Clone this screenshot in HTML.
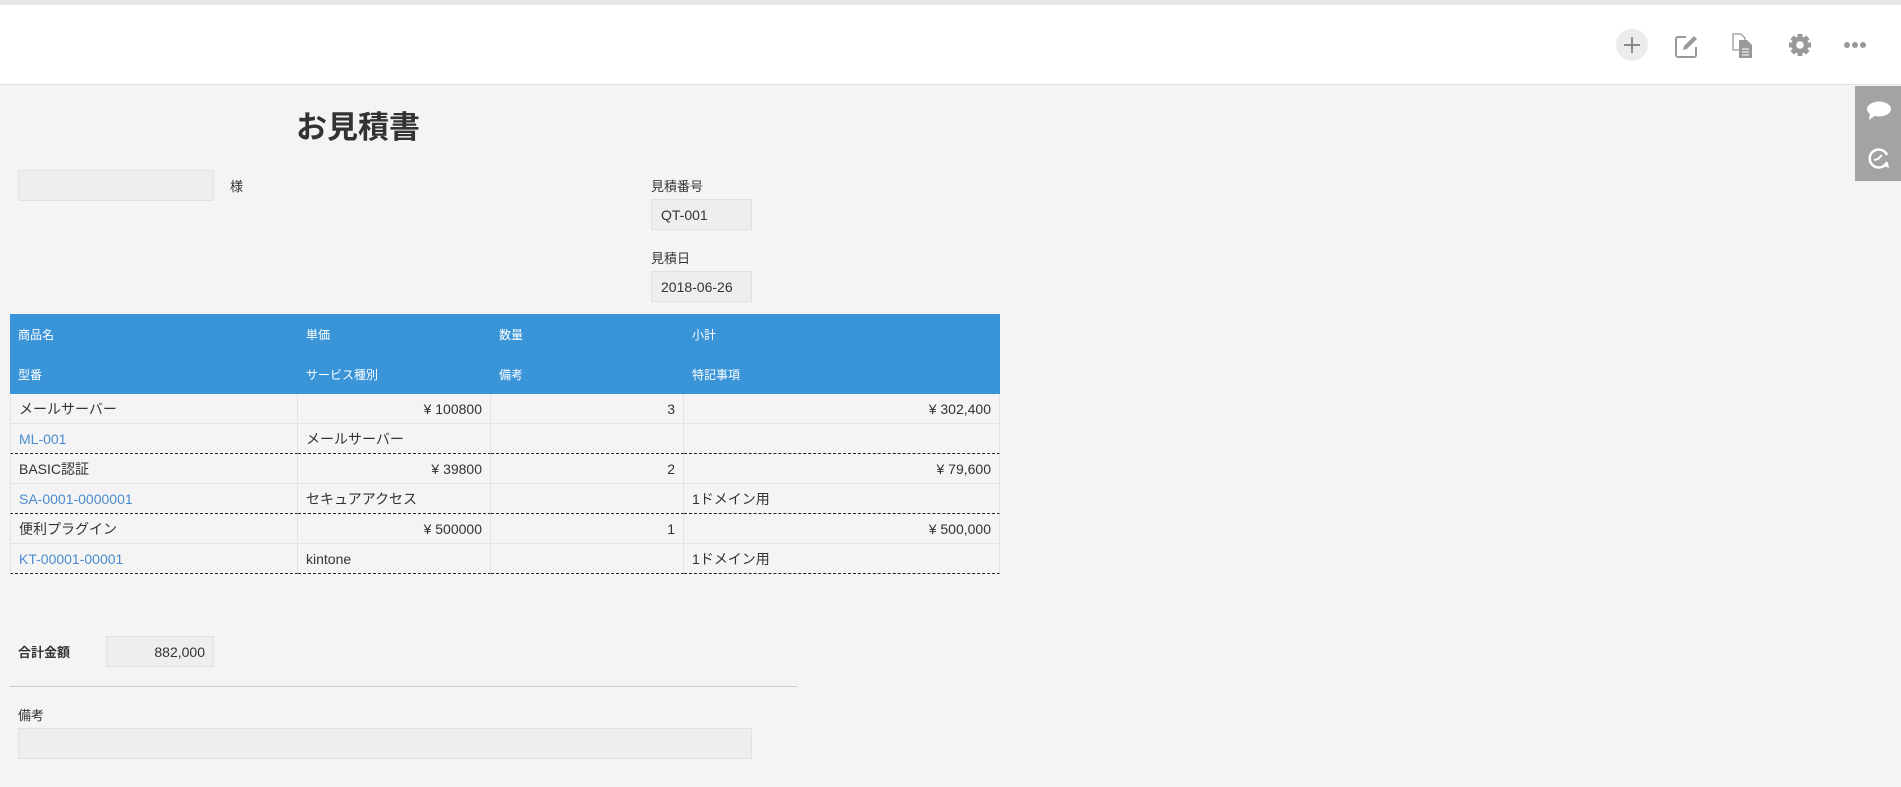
<!DOCTYPE html>
<html><head><meta charset="utf-8">
<style>
*{margin:0;padding:0;box-sizing:border-box}
body{width:1901px;height:787px;background:#f4f4f4;font-family:"Liberation Sans","Noto Sans CJK JP",sans-serif;color:#333;position:relative;overflow:hidden;font-size:14px}
.abs{position:absolute}
.top{left:0;top:0;width:1901px;height:5px;background:#e8e8e8}
.hdr{left:0;top:5px;width:1901px;height:80px;background:#fff;border-bottom:1px solid #e0e0e0}
.box{background:#eee;border:1px solid #e1e1e1}
.lbl{font-size:13px;color:#333}
table{border-collapse:separate;border-spacing:0;position:absolute;left:10px;top:314px;width:990px;table-layout:fixed}
th{background:#3a94d8;color:#fff;font-size:12px;font-weight:normal;text-align:left;padding:0 8px;height:40px}
td{height:30px;padding:0 8px;border-right:1px solid #e3e3e3;border-bottom:1px solid #e3e3e3;font-size:14px;color:#333}
td:first-child{border-left:1px solid #e3e3e3}
td.r{text-align:right}
td.l{color:#4a8ccf}
tr.d td{border-bottom:1px dashed #222}
</style></head><body>
<div class="abs top"></div>
<div class="abs hdr"></div>
<div class="abs" style="left:1616px;top:29px;width:32px;height:32px;border-radius:50%;background:#ececec"></div>
<svg class="abs" style="left:1616px;top:29px" width="32" height="32"><path d="M16 8v16M8 16h16" stroke="#8a8a8a" stroke-width="2"/></svg>
<svg class="abs" style="left:1674px;top:33px" width="26" height="26" viewBox="0 0 26 26"><path d="M12 4H4a2 2 0 0 0-2 2v16a2 2 0 0 0 2 2h16a2 2 0 0 0 2-2v-8" fill="none" stroke="#999" stroke-width="2"/><path d="M9 17l1-4 10-10 3 3-10 10z" fill="#999"/></svg>
<svg class="abs" style="left:1732px;top:33px" width="22" height="26" viewBox="0 0 22 26"><path d="M1 1h8l4 4v12H1z" fill="#fff" stroke="#999" stroke-width="1.3"/><path d="M7 7h8l5 5v13H7z" fill="#999"/><path d="M10 16h7M10 19h7M10 22h7" stroke="#fff" stroke-width="1"/></svg>
<svg class="abs" style="left:1787px;top:32px" width="26" height="26" viewBox="0 0 26 26"><g fill="#999"><circle cx="13" cy="13" r="8.5"/><g stroke="#999" stroke-width="5"><path d="M13 2v22M2 13h22M5.2 5.2l15.6 15.6M20.8 5.2L5.2 20.8"/></g></g><circle cx="13" cy="13" r="3.8" fill="#fff"/></svg>
<svg class="abs" style="left:1842px;top:38px" width="26" height="14"><g fill="#999"><circle cx="5" cy="7" r="3"/><circle cx="13" cy="7" r="3"/><circle cx="21" cy="7" r="3"/></g></svg>
<div class="abs" style="left:1855px;top:86px;width:46px;height:95px;background:#a3a3a3"></div>
<svg class="abs" style="left:1866px;top:100px" width="26" height="22"><ellipse cx="13" cy="9" rx="12" ry="7.5" fill="#fff"/><path d="M4 13l-1 7 7-5z" fill="#fff"/></svg>
<svg class="abs" style="left:1866px;top:146px" width="26" height="26" viewBox="0 0 26 26"><path d="M21 16A9 9 0 1 1 21 9" fill="none" stroke="#fff" stroke-width="2.5"/><path d="M8 14l4-1 4-4" fill="none" stroke="#fff" stroke-width="2"/><path d="M16 19l6-2 1 5z" fill="#fff"/></svg>
<div class="abs" style="left:296px;top:110px;font-size:31px;font-weight:bold;color:#333;line-height:36px">お見積書</div>
<div class="abs box" style="left:18px;top:170px;width:196px;height:31px"></div>
<div class="abs lbl" style="left:230px;top:176px">様</div>
<div class="abs lbl" style="left:651px;top:176px">見積番号</div>
<div class="abs box" style="left:651px;top:199px;width:101px;height:31px;padding:7px 9px;font-size:14px">QT-001</div>
<div class="abs lbl" style="left:651px;top:248px">見積日</div>
<div class="abs box" style="left:651px;top:271px;width:101px;height:31px;padding:7px 9px;font-size:14px">2018-06-26</div>
<table>
<colgroup><col style="width:288px"><col style="width:193px"><col style="width:193px"><col style="width:316px"></colgroup>
<tr><th>商品名</th><th>単価</th><th>数量</th><th>小計</th></tr>
<tr><th>型番</th><th>サービス種別</th><th>備考</th><th>特記事項</th></tr>
<tr><td>メールサーバー</td><td class="r">¥ 100800</td><td class="r">3</td><td class="r">¥ 302,400</td></tr>
<tr class="d"><td class="l">ML-001</td><td>メールサーバー</td><td></td><td></td></tr>
<tr><td>BASIC認証</td><td class="r">¥ 39800</td><td class="r">2</td><td class="r">¥ 79,600</td></tr>
<tr class="d"><td class="l">SA-0001-0000001</td><td>セキュアアクセス</td><td></td><td>1ドメイン用</td></tr>
<tr><td>便利プラグイン</td><td class="r">¥ 500000</td><td class="r">1</td><td class="r">¥ 500,000</td></tr>
<tr class="d"><td class="l">KT-00001-00001</td><td>kintone</td><td></td><td>1ドメイン用</td></tr>
</table>
<div class="abs" style="left:18px;top:642px;font-size:13px;font-weight:bold">合計金額</div>
<div class="abs box" style="left:106px;top:636px;width:108px;height:31px;padding:7px 8px;text-align:right;font-size:14px">882,000</div>
<div class="abs" style="left:10px;top:686px;width:787px;height:1px;background:#ccc"></div>
<div class="abs lbl" style="left:18px;top:705px">備考</div>
<div class="abs box" style="left:18px;top:728px;width:734px;height:31px"></div>
</body></html>
